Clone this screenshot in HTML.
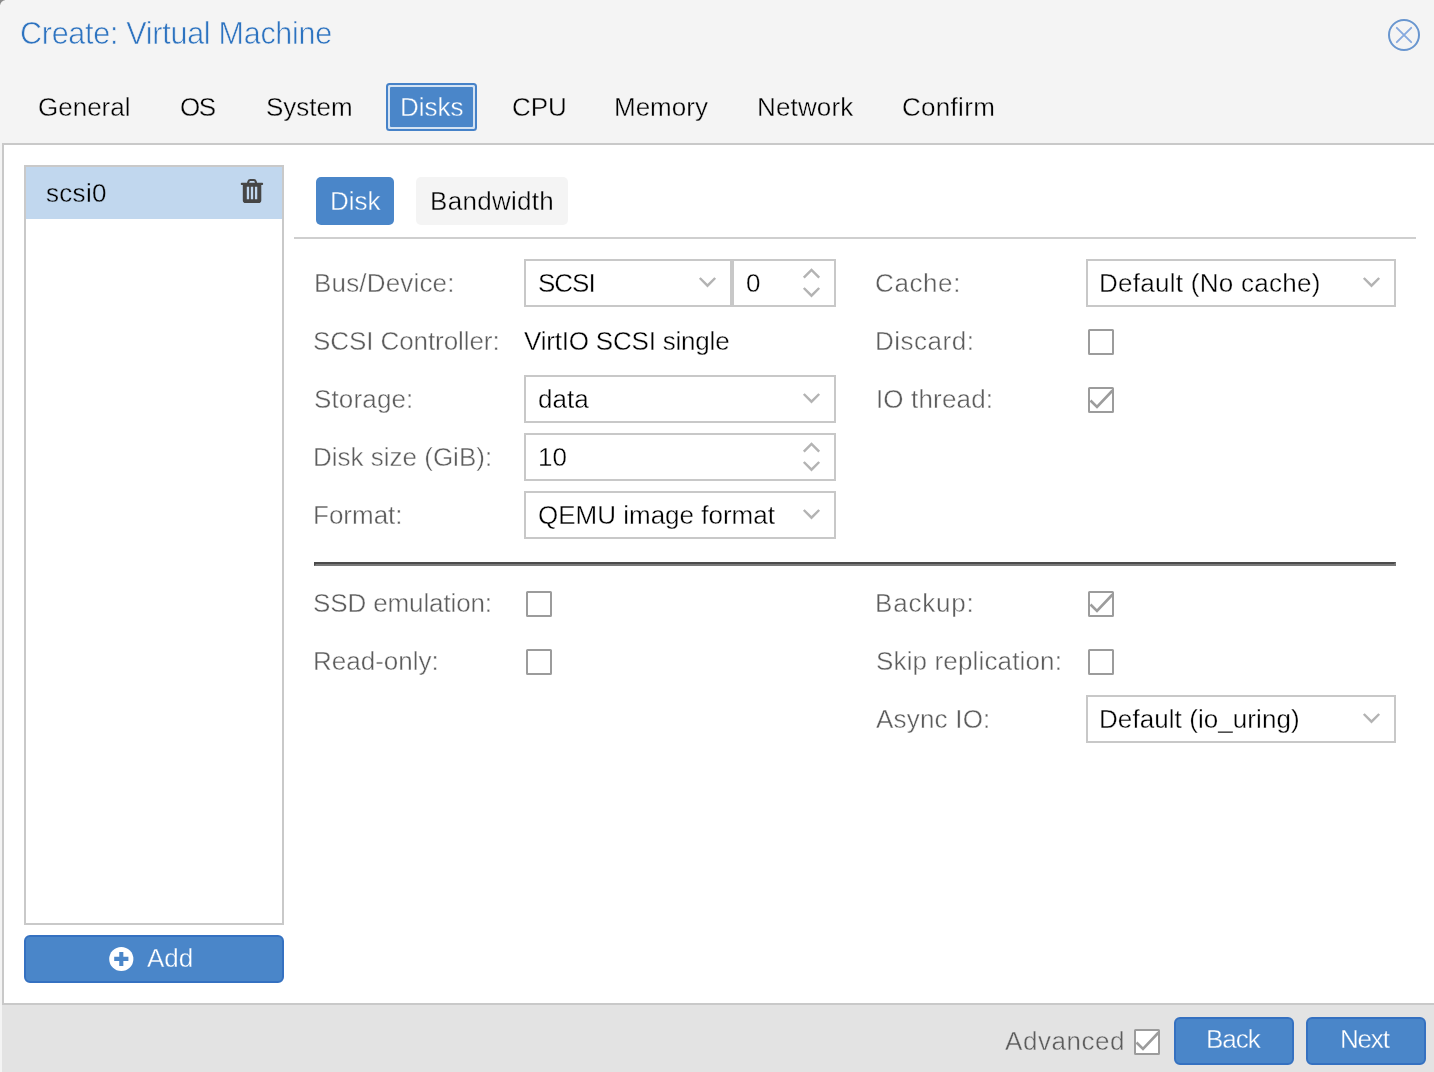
<!DOCTYPE html>
<html lang="en">
<head>
<meta charset="utf-8">
<title>Create: Virtual Machine</title>
<style>
*{box-sizing:border-box;margin:0;padding:0}
html,body{width:1434px;height:1072px;overflow:hidden;background:#f4f4f4}
body{position:relative;font-family:"Liberation Sans",sans-serif;font-size:26px;color:#000}
.abs{position:absolute}
.t{position:absolute;white-space:nowrap;line-height:32px;height:32px;will-change:transform}
.t{-webkit-text-stroke:0.350px #fff}
.lbl{color:#5c5c5c;-webkit-text-stroke-width:0.400px}
.tab,#title{-webkit-text-stroke-color:#f4f4f4}
.t.onblue{-webkit-text-stroke-color:#4a86c9}
.corner{position:absolute;left:0;top:0;width:5px;height:5px;background:#8a8a8a}
.corner i{position:absolute;left:0;top:0;width:12px;height:12px;border-radius:6px;background:#f4f4f4}
#title{left:19.800px;top:13px;font-size:30.5px;line-height:40px;height:40px;color:#2d73c0;letter-spacing:-0.270px;-webkit-text-stroke-width:0.600px}
.tab{top:91px}
#tabactive{left:386px;top:83px;width:91px;height:48px;border:2px solid #4682c8;border-radius:3.500px;background:#d4e3f3;padding:2px}
#tabactive b{display:block;width:100%;height:100%;background:#4a86c9;border-radius:1px}
#body{left:2px;top:143px;width:1440px;height:862px;background:#fff;border:2px solid #c9c9c9}
#footer{left:2px;top:1005px;width:1432px;height:67px;background:#e3e3e3}
#list{left:24px;top:165px;width:260px;height:760px;border:2px solid #c9c9c9;background:#fff}
#row{left:26px;top:167px;width:256px;height:52px;background:#c1d7ee}
.btn{position:absolute;background:#4a86c9;border:2px solid #3571c1;border-radius:6px;color:#fff;text-align:center}
.field{position:absolute;height:48px;border:2px solid #c8c8c8;background:#fff}
.cb{position:absolute;width:26px;height:26px;border:2px solid #9c9c9c;background:#fff;border-radius:1.5px;filter:blur(0.450px)}
.cb svg{left:-2px;top:-2px}
svg{position:absolute;overflow:visible}
</style>
</head>
<body>
<div class="corner"><i></i></div>
<div id="title" class="t">Create: Virtual Machine</div>
<svg id="close" style="left:1386px;top:17px" width="36" height="36" viewBox="0 0 36 36"><defs><filter id="bl" x="-20%" y="-20%" width="140%" height="140%"><feGaussianBlur stdDeviation="0.550"/></filter></defs><g filter="url(#bl)"><circle cx="18" cy="18" r="15" fill="none" stroke="#6996cf" stroke-width="2"/><path d="M10.800 10.800 L25.200 25.200 M25.200 10.800 L10.800 25.200" stroke="#86a9de" stroke-width="1.900" stroke-linecap="round" fill="none"/></g></svg>

<div id="tabactive" class="abs"><b></b></div>
<div class="t tab" style="left:38px">General</div>
<div class="t tab" style="left:180.300px;letter-spacing:-1.400px">OS</div>
<div class="t tab" style="left:266px">System</div>
<div class="t tab onblue" style="left:400px;color:#fff">Disks</div>
<div class="t tab" style="left:512px">CPU</div>
<div class="t tab" style="left:614px">Memory</div>
<div class="t tab" style="left:757px;letter-spacing:0.150px">Network</div>
<div class="t tab" style="left:901.500px;letter-spacing:0.300px">Confirm</div>

<div id="body" class="abs"></div>
<div id="footer" class="abs"></div>

<div id="list" class="abs"></div>
<div id="row" class="abs"></div>
<div class="t" style="left:46px;top:177px;letter-spacing:0.300px;-webkit-text-stroke-color:#c1d7ee">scsi0</div>
<svg id="trash" style="left:240px;top:178px" width="24" height="26" viewBox="0 0 24 26"><path d="M7.950 5.500 L8.500 3.300 Q8.900 1.950 10.300 1.950 H13.800 Q15.200 1.950 15.600 3.300 L16.150 5.500" fill="none" stroke="#464646" stroke-width="2.100" stroke-linejoin="round"/><rect x="0.800" y="4.800" width="22.300" height="2.200" rx="0.800" fill="#464646"/><path d="M2.800 6.500 H21.300 V22.300 a2.800 2.800 0 0 1 -2.800 2.800 H5.600 a2.800 2.800 0 0 1 -2.800 -2.800 z" fill="#464646"/><path d="M7.950 8.800 V21.200 M12 8.800 V21.200 M16.100 8.800 V21.200" stroke="#c1d7ee" stroke-width="2.300" fill="none"/></svg>

<div class="btn" style="left:24px;top:935px;width:260px;height:48px"></div>
<svg style="left:109px;top:947px" width="24" height="24" viewBox="0 0 24 24"><circle cx="12.300" cy="12" r="12.100" fill="#fff"/><path d="M12.300 5 v14 M5.200 11.900 h14.200" stroke="#4a86c9" stroke-width="4.100"/></svg>
<div class="t onblue" style="left:147px;top:942px;color:#fff">Add</div>

<!-- sub tabs -->
<div class="abs" style="left:316px;top:177px;width:78px;height:48px;background:#4a86c9;border-radius:5px"></div>
<div class="t onblue" style="left:330px;top:185px;color:#fff">Disk</div>
<div class="abs" style="left:416px;top:177px;width:152px;height:48px;background:#f4f4f4;border-radius:5px"></div>
<div class="t" style="left:429.500px;top:185px;letter-spacing:0.300px;-webkit-text-stroke-color:#f4f4f4">Bandwidth</div>
<div class="abs" style="left:294px;top:237px;width:1122px;height:2px;background:#cfcfcf"></div>

<!-- left column -->
<div class="t lbl" style="left:313.600px;top:267px;letter-spacing:0.170px">Bus/Device:</div>
<div class="field" style="left:524px;top:259px;width:210px"></div>
<div class="field" style="left:730px;top:259px;width:106px"></div>
<div class="abs" style="left:730px;top:259px;width:4px;height:48px;background:#c8c8c8"></div>
<div class="t" style="left:538px;top:267px;letter-spacing:-1px">SCSI</div>
<div class="t" style="left:746px;top:267px">0</div>

<div class="t lbl" style="left:313.300px;top:325px;letter-spacing:-0.080px">SCSI Controller:</div>
<div class="t" style="left:524px;top:325px;letter-spacing:-0.200px">VirtIO SCSI single</div>

<div class="t lbl" style="left:313.800px;top:383px;letter-spacing:0.150px">Storage:</div>
<div class="field" style="left:524px;top:375px;width:312px"></div>
<div class="t" style="left:538px;top:383px">data</div>

<div class="t lbl" style="left:313.300px;top:441px">Disk size (GiB):</div>
<div class="field" style="left:524px;top:433px;width:312px"></div>
<div class="t" style="left:538px;top:441px">10</div>

<div class="t lbl" style="left:313.300px;top:499px">Format:</div>
<div class="field" style="left:524px;top:491px;width:312px"></div>
<div class="t" style="left:538px;top:499px">QEMU image format</div>

<div class="abs" style="left:314px;top:562px;width:1082px;height:4px;border-top:2px solid #4b4b4b;border-left:2px solid #4b4b4b;border-bottom:2px solid #797979;border-right:2px solid #797979"></div>

<div class="t lbl" style="left:313.300px;top:587px;letter-spacing:-0.120px">SSD emulation:</div>
<div class="cb" style="left:526px;top:591px"></div>
<div class="t lbl" style="left:313.300px;top:645px">Read-only:</div>
<div class="cb" style="left:526px;top:649px"></div>

<!-- right column -->
<div class="t lbl" style="left:875px;top:267px;letter-spacing:0.600px">Cache:</div>
<div class="field" style="left:1086px;top:259px;width:310px"></div>
<div class="t" style="left:1099px;top:267px;letter-spacing:0.270px">Default (No cache)</div>

<div class="t lbl" style="left:874.500px;top:325px;letter-spacing:0.500px">Discard:</div>
<div class="cb" style="left:1088px;top:329px"></div>
<div class="t lbl" style="left:875.700px;top:383px;letter-spacing:0.150px">IO thread:</div>
<div class="cb" style="left:1088px;top:387px"><svg width="26" height="26" viewBox="0 0 26 26"><path d="M2.500 13.500 L9 20 L24.500 3.500" fill="none" stroke="#9c9c9c" stroke-width="2.600"/></svg></div>

<div class="t lbl" style="left:874.500px;top:587px;letter-spacing:0.800px">Backup:</div>
<div class="cb" style="left:1088px;top:591px"><svg width="26" height="26" viewBox="0 0 26 26"><path d="M2.500 13.500 L9 20 L24.500 3.500" fill="none" stroke="#9c9c9c" stroke-width="2.600"/></svg></div>
<div class="t lbl" style="left:875.600px;top:645px;letter-spacing:0.150px">Skip replication:</div>
<div class="cb" style="left:1088px;top:649px"></div>
<div class="t lbl" style="left:876.300px;top:703px;letter-spacing:0.200px">Async IO:</div>
<div class="field" style="left:1086px;top:695px;width:310px"></div>
<div class="t" style="left:1099px;top:703px;letter-spacing:0.070px">Default (io_uring)</div>

<!-- triggers -->
<svg style="left:698.9px;top:277px" width="17" height="11" viewBox="0 0 17 11"><path d="M0.800 1 L8.500 8.700 L16.200 1" fill="none" stroke="#b3b3b3" stroke-width="2.450"/></svg>
<svg style="left:802.9px;top:393px" width="17" height="11" viewBox="0 0 17 11"><path d="M0.800 1 L8.500 8.700 L16.200 1" fill="none" stroke="#b3b3b3" stroke-width="2.450"/></svg>
<svg style="left:802.9px;top:509px" width="17" height="11" viewBox="0 0 17 11"><path d="M0.800 1 L8.500 8.700 L16.200 1" fill="none" stroke="#b3b3b3" stroke-width="2.450"/></svg>
<svg style="left:1362.9px;top:277px" width="17" height="11" viewBox="0 0 17 11"><path d="M0.800 1 L8.500 8.700 L16.200 1" fill="none" stroke="#b3b3b3" stroke-width="2.450"/></svg>
<svg style="left:1362.9px;top:713px" width="17" height="11" viewBox="0 0 17 11"><path d="M0.800 1 L8.500 8.700 L16.200 1" fill="none" stroke="#b3b3b3" stroke-width="2.450"/></svg>
<svg style="left:802.9px;top:268px" width="17" height="11" viewBox="0 0 17 11"><path d="M0.800 9.700 L8.500 2 L16.200 9.700" fill="none" stroke="#b3b3b3" stroke-width="2.450"/></svg>
<svg style="left:802.9px;top:286.8px" width="17" height="11" viewBox="0 0 17 11"><path d="M0.800 1 L8.500 8.700 L16.200 1" fill="none" stroke="#b3b3b3" stroke-width="2.450"/></svg>
<svg style="left:802.9px;top:442px" width="17" height="11" viewBox="0 0 17 11"><path d="M0.800 9.700 L8.500 2 L16.200 9.700" fill="none" stroke="#b3b3b3" stroke-width="2.450"/></svg>
<svg style="left:802.9px;top:460.8px" width="17" height="11" viewBox="0 0 17 11"><path d="M0.800 1 L8.500 8.700 L16.200 1" fill="none" stroke="#b3b3b3" stroke-width="2.450"/></svg>

<!-- footer -->
<div class="t lbl" style="left:1004.800px;top:1025px;letter-spacing:0.550px;-webkit-text-stroke-color:#e3e3e3">Advanced</div>
<div class="cb" style="left:1134px;top:1029px"><svg width="26" height="26" viewBox="0 0 26 26"><path d="M2.500 13.500 L9 20 L24.500 3.500" fill="none" stroke="#9c9c9c" stroke-width="2.600"/></svg></div>
<div class="btn" style="left:1174px;top:1017px;width:120px;height:48px"></div>
<div class="t onblue" style="left:1205.700px;top:1023px;color:#fff;letter-spacing:-1px">Back</div>
<div class="btn" style="left:1306px;top:1017px;width:120px;height:48px"></div>
<div class="t onblue" style="left:1340.200px;top:1023px;color:#fff;letter-spacing:-1.200px">Next</div>
</body>
</html>
